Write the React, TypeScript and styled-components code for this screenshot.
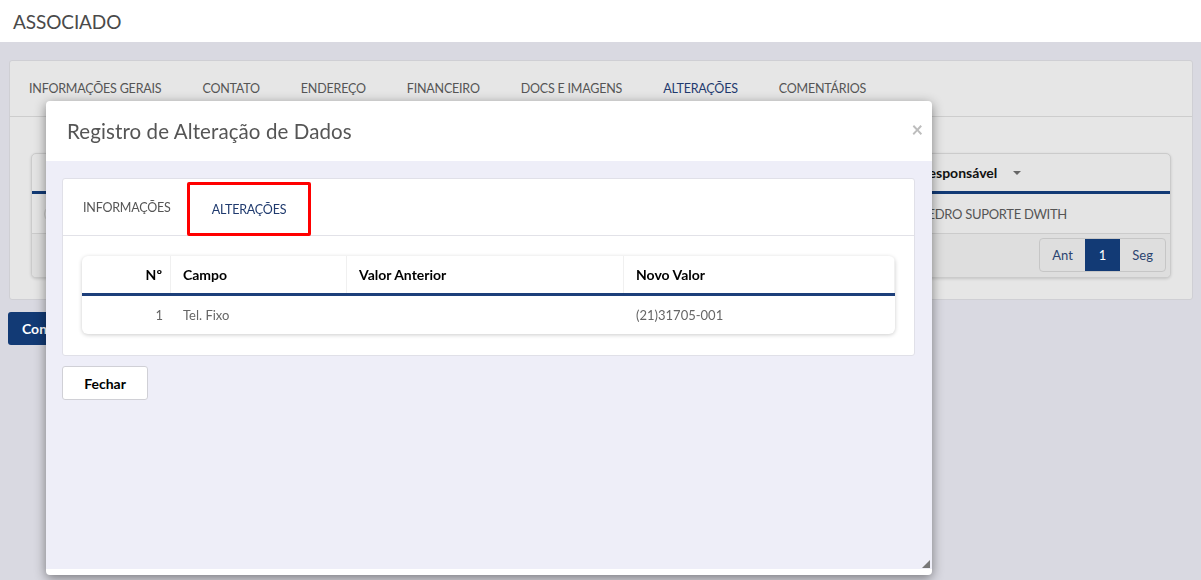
import styled, { createGlobalStyle } from 'styled-components';

const Global = createGlobalStyle`
  html, body { margin: 0; padding: 0; }
  body {
    background: #d9d9e1;
    font-family: Lato, "Liberation Sans", sans-serif;
    color: #555;
    width: 1201px;
    height: 580px;
    overflow: hidden;
  }
`;

// Cabeçalho da página
const TopBar = styled.header`
  height: 42px;
  background: #fff;
  display: flex;
  align-items: center;
  padding-left: 13px;
  font-size: 19px;
  letter-spacing: -0.1px;
  color: #4a4a4a;
`;

const Content = styled.main`
  padding: 18px 8px 0 9px;
`;

const Card = styled.section`
  background: #e6e6e6;
  border: 1px solid #cfcfd4;
  border-radius: 3px;
`;

const TabBar = styled.nav<{ $inner?: boolean }>`
  display: flex;
  height: ${p => (p.$inner ? 56 : 55)}px;
  border-bottom: 1px solid ${p => (p.$inner ? '#e2e2e8' : '#cdcdcd')};
`;

const Tab = styled.div<{ $active?: boolean; $marked?: boolean }>`
  display: flex;
  align-items: center;
  padding: 0 22px 0 19px;
  font-size: 12.5px;
  letter-spacing: -0.2px;
  color: ${p => (p.$active ? '#1f3a6e' : '#555')};
  box-sizing: border-box;
  ${p => p.$marked && `
    border: 3px solid #f00;
    border-radius: 2px;
    margin: 3px 0 -1px -6px;
    padding: 0 22px;
  `}
`;

const CardBody = styled.div`
  padding: 36px 21px 21px;
`;

// Tabela de fundo (coberta pelo modal)
const Grid = styled.div`
  background: #e4e4e4;
  border: 1px solid #cbcbcb;
  border-radius: 5px;
  box-shadow: 0 1px 3px rgba(0,0,0,0.15);
  overflow: hidden;
`;

const GridHead = styled.div`
  display: grid;
  grid-template-columns: 876px 1fr;
  height: 37px;
  border-bottom: 3px solid #123a75;
  font-size: 14px;
  font-weight: 700;
  color: #111;
`;

const GridRow = styled.div`
  display: grid;
  grid-template-columns: 876px 1fr;
  height: 39px;
  border-bottom: 1px solid #cbcbcb;
  font-size: 13px;
  letter-spacing: -0.3px;
  color: #555;
`;

const GridCell = styled.div`
  display: flex;
  align-items: center;
  gap: 12px;
  padding: 0 12px;
`;

const Caret = styled.span`
  border-left: 4px solid transparent;
  border-right: 4px solid transparent;
  border-top: 4px solid #666;
  margin-left: 4px;
`;

const Dot = styled.span`
  width: 16px;
  height: 16px;
  border-radius: 50%;
  border: 1px solid #c8c8c8;
`;

const Pager = styled.div`
  display: flex;
  justify-content: flex-end;
  padding: 4px 4px 5px;
  background: #dedede;
`;

const PagerGroup = styled.div`
  display: flex;
  border: 1px solid #c6c6c6;
  border-radius: 4px;
  overflow: hidden;
`;

const PageBtn = styled.span<{ $current?: boolean }>`
  height: 32px;
  display: flex;
  align-items: center;
  padding: 0 ${p => (p.$current ? 14 : 12)}px;
  font-size: 13px;
  color: ${p => (p.$current ? '#fff' : '#2b4470')};
  background: ${p => (p.$current ? '#123a75' : 'transparent')};
`;

const PrimaryButton = styled.button`
  margin: 12px 0 0 -1px;
  height: 33px;
  padding: 0 14px;
  border: none;
  border-radius: 3px;
  background: #123a75;
  color: #fff;
  font-family: inherit;
  font-size: 14px;
  font-weight: 700;
`;

// Modal
const Modal = styled.div`
  position: fixed;
  top: 101px;
  left: 46px;
  width: 886px;
  height: 474px;
  background: #fff;
  border-radius: 4px;
  box-shadow: 0 3px 12px rgba(0,0,0,0.45);
  display: flex;
  flex-direction: column;
  padding-bottom: 6px;
  box-sizing: border-box;
`;

const ModalHeader = styled.div`
  height: 60px;
  flex-shrink: 0;
  display: flex;
  align-items: center;
  justify-content: space-between;
  padding: 0 9px 0 21px;
`;

const ModalTitle = styled.h4`
  margin: 0;
  font-size: 20.5px;
  letter-spacing: 0.1px;
  font-weight: 400;
  color: #555;
`;

const Close = styled.span`
  font-size: 20px;
  font-weight: 700;
  color: #bdbdbd;
  margin-top: -4px;
`;

const ModalBody = styled.div`
  flex: 1;
  background: #eeeef8;
  padding: 17px 17px 0 16px;
  position: relative;
`;

const Panel = styled.div`
  background: #fff;
  border: 1px solid #e0e0e8;
  border-radius: 3px;
`;

const InnerTabs = styled(TabBar)`
  padding-left: 1px;
`;

const PanelBody = styled.div`
  padding: 20px 19px 21px 19px;
`;

const Table = styled.div`
  border-radius: 6px;
  box-shadow: 0 1px 4px rgba(0,0,0,0.2);
  overflow: hidden;
`;

const Row = styled.div<{ $head?: boolean }>`
  display: grid;
  grid-template-columns: 89px 176px 277px 1fr;
  height: ${p => (p.$head ? 37 : 38)}px;
  ${p => p.$head && 'border-bottom: 3px solid #1d3f7a;'}
  font-size: ${p => (p.$head ? 14 : 13)}px;
  font-weight: ${p => (p.$head ? 700 : 400)};
  color: ${p => (p.$head ? '#000' : '#666')};
`;

const Cell = styled.div<{ $num?: boolean; $head?: boolean }>`
  display: flex;
  align-items: center;
  justify-content: ${p => (p.$num ? 'flex-end' : 'flex-start')};
  padding: 0 12px;
  padding-right: ${p => (p.$num ? 8 : 12)}px;
  ${p => p.$head && 'border-right: 1px solid #f0f0f0;'}
`;

const CloseButton = styled.button`
  margin-top: 10px;
  width: 86px;
  height: 34px;
  background: #fff;
  border: 1px solid #d0d0d6;
  border-radius: 3px;
  font-family: inherit;
  font-size: 14px;
  font-weight: 700;
  color: #000;
`;

const Grip = styled.svg`
  position: absolute;
  right: 2px;
  bottom: 1px;
`;

const columns = ['Nº', 'Campo', 'Valor Anterior', 'Novo Valor'];
const changes = [{ n: 1, campo: 'Tel. Fixo', anterior: '', novo: '(21)31705-001' }];

export default function App() {
  return (
    <>
      <Global />
      <TopBar>ASSOCIADO</TopBar>
      <Content>
        <Card>
          <TabBar>
            {['INFORMAÇÕES GERAIS', 'CONTATO', 'ENDEREÇO', 'FINANCEIRO', 'DOCS E IMAGENS', 'ALTERAÇÕES', 'COMENTÁRIOS'].map(t => (
              <Tab key={t} $active={t === 'ALTERAÇÕES'}>{t}</Tab>
            ))}
          </TabBar>
          <CardBody>
            <Grid>
              <GridHead>
                <GridCell />
                <GridCell>Responsável<Caret /></GridCell>
              </GridHead>
              <GridRow>
                <GridCell><Dot /></GridCell>
                <GridCell>PEDRO SUPORTE DWITH</GridCell>
              </GridRow>
              <Pager>
                <PagerGroup>
                  <PageBtn>Ant</PageBtn>
                  <PageBtn $current>1</PageBtn>
                  <PageBtn>Seg</PageBtn>
                </PagerGroup>
              </Pager>
            </Grid>
          </CardBody>
        </Card>
        <PrimaryButton>Confirmar</PrimaryButton>
      </Content>

      <Modal>
        <ModalHeader>
          <ModalTitle>Registro de Alteração de Dados</ModalTitle>
          <Close>×</Close>
        </ModalHeader>
        <ModalBody>
          <Panel>
            <InnerTabs $inner>
              <Tab>INFORMAÇÕES</Tab>
              <Tab $active $marked>ALTERAÇÕES</Tab>
            </InnerTabs>
            <PanelBody>
              <Table>
                <Row $head>
                  {columns.map((c, i) => (
                    <Cell key={c} $head $num={i === 0}>{c}</Cell>
                  ))}
                </Row>
                {changes.map(r => (
                  <Row key={r.n}>
                    <Cell $num>{r.n}</Cell>
                    <Cell>{r.campo}</Cell>
                    <Cell>{r.anterior}</Cell>
                    <Cell>{r.novo}</Cell>
                  </Row>
                ))}
              </Table>
            </PanelBody>
          </Panel>
          <CloseButton>Fechar</CloseButton>
          <Grip width="8" height="8" viewBox="0 0 8 8">
            <path d="M8 0 L8 8 L0 8 Z" fill="#777" />
          </Grip>
        </ModalBody>
      </Modal>
    </>
  );
}
